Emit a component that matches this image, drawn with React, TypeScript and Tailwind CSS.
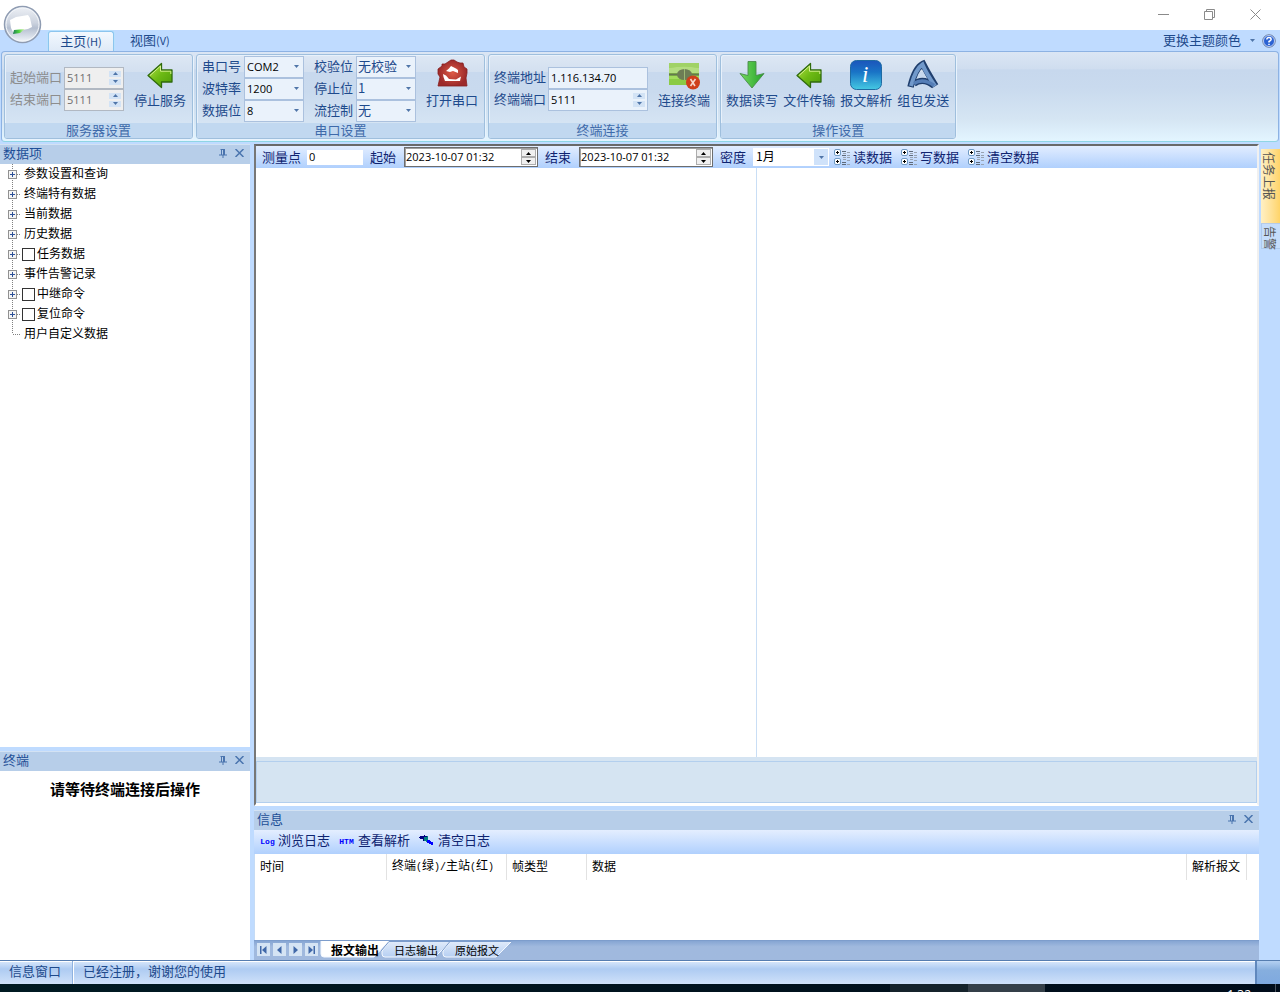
import { useState } from "react"
import type { ReactNode } from "react"

const treeItems = [
  { name: "参数设置和查询" },
  { name: "终端特有数据" },
  { name: "当前数据" },
  { name: "历史数据" },
  { name: "任务数据", check: true },
  { name: "事件告警记录" },
  { name: "中继命令", check: true },
  { name: "复位命令", check: true },
  { name: "用户自定义数据", leaf: true },
]

const outputTabs = ["报文输出", "日志输出", "原始报文"]

function Arrow({ up, className = "" }: { up?: boolean; className?: string }) {
  return (
    <svg width="5" height="3" viewBox="0 0 5 3" className={className} fill="currentColor">
      <path d={up ? "M0 3L2.5 0L5 3Z" : "M0 0H5L2.5 3Z"} />
    </svg>
  )
}

function RibbonGroup({ title, children }: { title: string; children: ReactNode }) {
  return (
    <section className="flex shrink-0 flex-col overflow-hidden rounded-[3px] border border-[#9fbfdd] bg-[linear-gradient(#dde7f4,#d3e0f0_20%,#c8d9ee_21%,#c9daee_45%,#dbe9f6)] shadow-[inset_1px_1px_0_#e8f1fb,1px_1px_0_#e8f3fd]">
      <div className="flex flex-1 items-center gap-2.5 pr-1.5 pl-[5px]">{children}</div>
      <h2 className="h-[15px] bg-[#c1d8f0] text-center leading-[13px] text-[#3e6aaa]">{title}</h2>
    </section>
  )
}

function Spin({ id, label, value, wide, disabled }: { id: string; label: string; value: string; wide?: boolean; disabled?: boolean }) {
  return (
    <div className="flex h-[22px] items-center gap-[2px]">
      <label htmlFor={id} className={`pb-[2px] ${disabled ? "text-[#8d8d8d]" : ""}`}>
        {label}
      </label>
      <div
        className={`flex h-[22px] items-center border pr-[2px] ${wide ? "w-[100px]" : "w-[60px]"} ${
          disabled ? "border-[#b1b8c2] bg-[#efefef] text-[#6d6d6d]" : "border-[#abc1de] bg-[#eaf2fb] text-black"
        }`}
      >
        <input
          id={id}
          defaultValue={value}
          disabled={disabled}
          className="w-0 min-w-0 flex-1 pl-[2px] font-[Open_Sans,sans-serif] text-[11px] outline-none"
        />
        <div className="flex flex-col gap-[2px] text-[#4f75a8]">
          <button aria-label={`${label} +`} disabled={disabled} className="flex h-[6px] w-3 items-center justify-center bg-[#d3e3f5]">
            <Arrow up />
          </button>
          <button aria-label={`${label} -`} disabled={disabled} className="flex h-[6px] w-3 items-center justify-center bg-[#d3e3f5]">
            <Arrow />
          </button>
        </div>
      </div>
    </div>
  )
}

function Combo({ id, label, value, dim }: { id: string; label: string; value: string; dim?: boolean }) {
  return (
    <div className="flex h-[22px] items-center gap-[3px]">
      <label htmlFor={id} className="pb-[2px]">
        {label}
      </label>
      <div className="relative h-[22px] w-[60px] border border-[#abc1de] bg-[#eaf2fb]">
        <select
          id={id}
          className={`block h-5 w-full appearance-none outline-none ${
            dim ? "pb-[2px] pl-px text-[13px] text-[#1e4a8c]" : "pl-[2px] font-[Open_Sans,sans-serif] text-[11px] text-black"
          }`}
        >
          <option>{value}</option>
        </select>
        <Arrow className="pointer-events-none absolute top-2 right-1 text-[#4f75a8]" />
      </div>
    </div>
  )
}

function BigButton({ label, children }: { label: string; children: ReactNode }) {
  return (
    <button className="flex flex-col items-center pb-2.5">
      <svg width="32" height="32" viewBox="0 0 32 32" aria-hidden="true">
        {children}
      </svg>
      <span className="leading-[18px]">{label}</span>
    </button>
  )
}

function GreenLeftArrow() {
  return (
    <>
      <defs>
        <linearGradient id="leaf" x1="0" y1="0" x2="1" y2="1">
          <stop offset="0" stopColor="#b9e34a" />
          <stop offset="0.5" stopColor="#6dba14" />
          <stop offset="1" stopColor="#4c9a08" />
        </linearGradient>
      </defs>
      <path d="M4 16.5L17.500 4.500V11H28V23H17.500V28.500Z" fill="url(#leaf)" stroke="#2f6a0d" strokeWidth="1.300" strokeLinejoin="round" />
      <path d="M6 16.500L16.500 7V12.200H26.800V15" fill="none" stroke="#d3f08e" strokeWidth="1" />
    </>
  )
}

function PanelHeader({ title }: { title: string }) {
  return (
    <header className="flex h-5 shrink-0 items-center border-t border-[#d3e2f3] bg-[#b7cee9] px-[3px] pb-[3px] text-[#1e4e97]">
      <h2 className="flex-1 leading-4">{title}</h2>
      <button aria-label="固定" className="flex w-4 justify-center">
        <svg width="8" height="9" viewBox="0 0 8 9" fill="none" stroke="#4a74ae">
          <path d="M2.500 0V6M1.500 .5H6M5.500 0V6M4.500 0V6M0 6H8M4 6V9" />
        </svg>
      </button>
      <button aria-label="关闭" className="flex w-4 justify-center">
        <svg width="9" height="8" viewBox="0 0 9 8" stroke="#4a74ae" strokeWidth="1.500">
          <path d="M.5 0L8.500 8M8.500 0L.5 8" />
        </svg>
      </button>
    </header>
  )
}

function TreeNode({ item }: { item: { name: string; check?: boolean; leaf?: boolean } }) {
  const lines = (
    <svg width="22" height="20" viewBox="0 0 22 20" fill="none" shapeRendering="crispEdges">
      <path d={item.leaf ? "M12.500 0V10" : "M12.500 0V20"} stroke="#808080" strokeDasharray="1 1" />
      <path d="M13 10.500H21" stroke="#808080" strokeDasharray="1 1" />
      {!item.leaf && (
        <>
          <rect x="8.500" y="6.500" width="8" height="8" fill="#f4f4f4" stroke="#919191" />
          <path d="M10 10.500H15M12.500 8V13" stroke="#2b4f96" />
        </>
      )}
    </svg>
  )
  return (
    <li className="flex h-5 items-center">
      {item.leaf ? lines : <button aria-label={`展开 ${item.name}`}>{lines}</button>}
      {item.check ? (
        <label className="flex items-center gap-[2px]">
          <input type="checkbox" className="size-[13px] appearance-none border border-[#333] bg-white checked:bg-[#4a74ae]" />
          <span className="pb-[2px]">{item.name}</span>
        </label>
      ) : (
        <span className="pb-[2px] pl-[2px]">{item.name}</span>
      )}
    </li>
  )
}

function DateField({ id, label }: { id: string; label: string }) {
  return (
    <div className="flex items-center gap-2">
      <label htmlFor={id}>{label}</label>
      <div className="flex h-5 w-[134px] items-center border border-[#6d6d6d] bg-white pr-px shadow-[inset_1px_1px_0_#a0a0a0]">
        <input
          id={id}
          defaultValue="2023-10-07 01:32"
          className="w-0 min-w-0 flex-1 pl-px font-[Open_Sans,sans-serif] text-[11px] text-black outline-none"
        />
        <div className="flex flex-col text-black">
          <button aria-label={`${label} +`} className="flex h-2 w-[15px] items-center justify-center border border-[#adadad] bg-[#f0f0f0]">
            <Arrow up />
          </button>
          <button aria-label={`${label} -`} className="flex h-2 w-[15px] items-center justify-center border border-[#adadad] bg-[#f0f0f0]">
            <Arrow />
          </button>
        </div>
      </div>
    </div>
  )
}

function DataButton({ label }: { label: string }) {
  return (
    <button className="flex items-center gap-[3px]">
      <svg width="16" height="16" viewBox="0 0 16 16" fill="none">
        <rect x=".5" y=".5" width="6" height="6" rx="1.500" fill="#fff" stroke="#6f9ac4" />
        <rect x=".5" y="9.500" width="6" height="6" rx="1.500" fill="#fff" stroke="#6f9ac4" />
        <path d="M2 3.500H5M3.500 2V5M2 12.500H5M3.500 11V14" stroke="#000" />
        <path d="M8 2.500H12M8 6.500H12M8 13.500H12M8 15.500H12" stroke="#5f6a79" />
        <path d="M13 3.500H16M13 6.500H16M13 8.500H16M13 11.500H16M13 15.500H16M9 4.500H12M9 8.500H12M9 10.500H12" stroke="#98a3b2" />
      </svg>
      {label}
    </button>
  )
}

function NavButton({ label, d }: { label: string; d: string }) {
  return (
    <button aria-label={label} className="flex size-[13px] items-center justify-center bg-[#d5e4f4]">
      <svg width="7" height="8" viewBox="0 0 7 8" fill="#4068a8">
        <path d={d} />
      </svg>
    </button>
  )
}

function Ribbon() {
  return (
    <div className="mx-px flex h-[91px] shrink-0 gap-[3px] rounded-[4px] border border-[#8db2e3] border-b-[#8fd5e4] bg-[linear-gradient(#dbe6f4,#cfddef_19%,#c7d8ed_20%,#c9daee_40%,#d5e5f3_75%,#e3f5ff)] px-[2px] pt-[2px] pb-[2px] text-[#1e4a8c]">
      <RibbonGroup title="服务器设置">
        <div className="mb-px">
          <Spin id="start-port" label="起始端口" value="5111" disabled />
          <Spin id="end-port" label="结束端口" value="5111" disabled />
        </div>
        <BigButton label="停止服务">
          <GreenLeftArrow />
        </BigButton>
      </RibbonGroup>

      <RibbonGroup title="串口设置">
        <div>
          <Combo id="com" label="串口号" value="COM2" />
          <Combo id="baud" label="波特率" value="1200" />
          <Combo id="bits" label="数据位" value="8" />
        </div>
        <div>
          <Combo id="parity" label="校验位" value="无校验" dim />
          <Combo id="stop" label="停止位" value="1" dim />
          <Combo id="flow" label="流控制" value="无" dim />
        </div>
        <BigButton label="打开串口">
          <defs>
            <radialGradient id="house">
              <stop offset="0" stopColor="#dd5a46" />
              <stop offset="1" stopColor="#9c2a2a" />
            </radialGradient>
          </defs>
          <path d="M12 3L15 1H18L21 3L24 4H27L28 8L31 10V14L30 19L31 27H2L4 18L2 15V10L6 7V5H9Z" fill="url(#house)" stroke="#872020" strokeWidth=".8" />
          <path d="M10 12L13 9.500L15 7L20 9.500L22 11L22 14L17 12L14 13Z" fill="#fff" />
          <path d="M7 15L10 16.500L13 20L20 20.500L25 17.500L24 22H9L7.500 18Z" fill="#fff" />
        </BigButton>
      </RibbonGroup>

      <RibbonGroup title="终端连接">
        <div className="mb-px">
          <div className="flex h-[22px] items-center gap-[2px]">
            <label htmlFor="addr" className="pb-[2px]">
              终端地址
            </label>
            <input
              id="addr"
              defaultValue="1.116.134.70"
              className="h-[22px] w-[100px] border border-[#abc1de] bg-[#eaf2fb] pl-[2px] font-[Open_Sans,sans-serif] text-[11px] text-black outline-none"
            />
          </div>
          <Spin id="term-port" label="终端端口" value="5111" wide />
        </div>
        <BigButton label="连接终端">
          <path d="M1 4H31V26H1Z" fill="#8bcb45" />
          <path d="M1 4H31V9Q16 6 1 9Z" fill="#a0d266" />
          <path d="M1 9Q16 6 31 9V14H1Z" fill="#b3dd80" />
          <path d="M1 17H31V20H1Z" fill="#a2dc5c" />
          <path d="M1 15.500H31" stroke="#64794e" strokeWidth="2" />
          <ellipse cx="16.500" cy="15.500" rx="7.500" ry="5.500" fill="#6d7d55" />
          <path d="M16.500 10V21" stroke="#9cb873" strokeWidth="1" />
          <circle cx="25" cy="23.500" r="7" fill="#cf3f1b" />
          <path d="M22.500 20L27 27M27.500 20L22.500 27" stroke="#f7d7cc" strokeWidth="1.600" />
        </BigButton>
      </RibbonGroup>

      <RibbonGroup title="操作设置">
        <div className="flex gap-[5px]">
          <BigButton label="数据读写">
            <defs>
              <linearGradient id="down">
                <stop offset="0" stopColor="#74d95e" />
                <stop offset="1" stopColor="#24a32a" />
              </linearGradient>
            </defs>
            <path d="M12 2.500H20V16.500L28 14.500L16 29L4 14.500L12 16.500Z" fill="url(#down)" stroke="#4b8b4b" strokeWidth=".9" />
          </BigButton>
          <BigButton label="文件传输">
            <GreenLeftArrow />
          </BigButton>
          <BigButton label="报文解析">
            <defs>
              <linearGradient id="info" x1="0" y1="0" x2="0" y2="1">
                <stop offset="0" stopColor="#1b55bb" />
                <stop offset=".4" stopColor="#1974c6" />
                <stop offset="1" stopColor="#45c9e2" />
              </linearGradient>
            </defs>
            <rect x=".5" y="1.500" width="31" height="29" rx="6" fill="url(#info)" stroke="#1e6ba3" />
            <text x="12" y="23" fill="#fff" fontFamily="Liberation Serif, serif" fontStyle="italic" fontSize="23">
              i
            </text>
          </BigButton>
          <BigButton label="组包发送">
            <path d="M3.500 28Q8 9 16 5Q20 13 28.500 27" fill="none" stroke="#203f6e" strokeWidth="6.500" />
            <path d="M7 25Q16 18 27 27" fill="none" stroke="#203f6e" strokeWidth="6" />
            <path d="M4 27Q8.500 10 15.500 5.500Q19 14 28 27" fill="none" stroke="#7199cb" strokeWidth="4" />
            <path d="M7 24.500Q16 18.500 27 26.500" fill="none" stroke="#557eb7" strokeWidth="3.500" />
          </BigButton>
        </div>
      </RibbonGroup>
    </div>
  )
}

export default function App() {
  const [tab, setTab] = useState(0)

  return (
    <div className="relative flex h-screen flex-col overflow-hidden bg-[#bfdbff] font-[Noto_Sans_CJK_SC,sans-serif] text-[13px] leading-4 whitespace-nowrap text-[#1e4a8c]">
      <div className="flex h-[30px] shrink-0 items-start justify-end bg-white pr-[2px]">
        <button aria-label="最小化" className="flex h-7 w-[46px] items-center justify-center">
          <svg width="11" height="11" stroke="#8a8a8a" fill="none"><path d="M0 5.500H11" /></svg>
        </button>
        <button aria-label="还原" className="flex h-7 w-[46px] items-center justify-center">
          <svg width="11" height="11" stroke="#8a8a8a" fill="none"><path d="M.5 2.500H8.500V10.500H.5ZM2.500 2.500V.5H10.500V8.500H8.500" /></svg>
        </button>
        <button aria-label="关闭窗口" className="flex h-7 w-[46px] items-center justify-center">
          <svg width="11" height="11" stroke="#8a8a8a" fill="none"><path d="M.5 .5L10.500 10.500M10.500 .5L.5 10.500" /></svg>
        </button>
      </div>

      {/* round application button, sits over the title bar and the tab row */}
      <button aria-label="应用菜单" className="absolute top-[5px] left-[3px]">
        <svg width="40" height="40" viewBox="0 0 40 40">
          <defs>
            <linearGradient id="orb" x1="0" y1="0" x2="0" y2="1">
              <stop offset="0" stopColor="#eef1f6" />
              <stop offset=".45" stopColor="#ccd3df" />
              <stop offset=".6" stopColor="#b5bfd0" />
              <stop offset="1" stopColor="#f4f8fc" />
            </linearGradient>
            <linearGradient id="strip">
              <stop offset="0" stopColor="#217c58" />
              <stop offset=".5" stopColor="#4dd53c" />
              <stop offset="1" stopColor="#f0f6cc" />
            </linearGradient>
          </defs>
          <circle cx="19.500" cy="19.500" r="18" fill="url(#orb)" stroke="#8f9cb2" strokeWidth="1.500" />
          <circle cx="19.500" cy="19.500" r="16.500" fill="none" stroke="#f3f6fa" />
          <path d="M7 15L13 12L25 10L27 13L29 22L25 24L19 25L10 27L8 23Z" fill="#fff" />
          <path d="M11 25L22 24L17 28L10 29Z" fill="url(#strip)" />
        </svg>
      </button>

      <nav className="flex h-[21px] shrink-0 items-end pr-1 pl-12">
        <button className="h-5 w-[66px] rounded-t-[3px] border border-b-0 border-[#8cc5ee] bg-linear-to-b from-[#f2f8fe] to-[#dfeaf7] pb-[2px] leading-4 shadow-[0_0_2px_#a8f0f8]">
          主页<span className="text-[11px]">(H)</span>
        </button>
        <button className="ml-4 h-5 pb-[2px] leading-4">
          视图<span className="text-[11px]">(V)</span>
        </button>
        <div className="ml-auto flex h-[21px] items-center gap-[7px]">
          <button className="flex items-center gap-[9px]">
            <span className="pb-[2px]">更换主题颜色</span>
            <Arrow className="text-[#4f75a8]" />
          </button>
          <button aria-label="帮助">
            <svg width="14" height="14" viewBox="0 0 14 14">
              <circle cx="7" cy="7" r="6.300" fill="#2b62d3" stroke="#7e8ca5" />
              <circle cx="7" cy="7" r="5.500" fill="none" stroke="#dbe6fa" strokeWidth=".8" />
              <path d="M4.800 5.500Q5 3.500 7 3.500T9.200 5.300Q9.200 6.300 7 7.500V8.600M7 9.700V11" fill="none" stroke="#fff" strokeWidth="1.500" />
            </svg>
          </button>
        </div>
      </nav>

      <Ribbon />

      <main className="flex min-h-0 flex-1 pt-[2px]">
        <aside className="flex w-[250px] shrink-0 flex-col">
          <PanelHeader title="数据项" />
          <ul className="min-h-0 flex-1 bg-white text-xs text-black">
            {treeItems.map((item) => (
              <TreeNode key={item.name} item={item} />
            ))}
          </ul>
          <div className="mt-1 flex flex-col">
            <PanelHeader title="终端" />
            <div className="h-[189px] bg-white pt-2 text-center text-[15px] leading-5 font-bold text-black">请等待终端连接后操作</div>
          </div>
        </aside>

        <div className="ml-1 flex min-w-0 flex-1 flex-col">
          <div className="flex min-h-0 flex-1 flex-col border-t-2 border-r-2 border-b-2 border-l-2 border-t-[#696969] border-r-[#f0f0f0] border-b-white border-l-[#777] bg-white pb-px">
            <div className="flex h-[22px] shrink-0 items-center gap-[7px] bg-linear-to-b from-[#e2edff] to-[#b0d0fd] pl-1.5 text-[#0e2370]">
              <div className="flex items-center gap-1.5">
                <label htmlFor="point">测量点</label>
                <input id="point" defaultValue="0" className="h-[15px] w-14 bg-white pl-[2px] font-[Open_Sans,sans-serif] text-[11px] text-black outline-none" />
              </div>
              <DateField id="from" label="起始" />
              <DateField id="to" label="结束" />
              <div className="flex items-center gap-[7px]">
                <label htmlFor="density">密度</label>
                <div className="relative h-[18px] w-[76px] bg-white">
                  <select id="density" className="block h-[18px] w-full appearance-none pb-[2px] pl-[3px] text-xs text-black outline-none">
                    <option>1月</option>
                  </select>
                  <span className="pointer-events-none absolute top-px right-px flex h-4 w-3.5 items-center justify-center bg-[#cfe2fa] text-[#4f75a8]">
                    <Arrow />
                  </span>
                </div>
              </div>
              <div className="-ml-[2px] flex gap-[9px]">
                <DataButton label="读数据" />
                <DataButton label="写数据" />
                <DataButton label="清空数据" />
              </div>
            </div>
            <div className="flex min-h-0 flex-1">
              <div className="flex-1 border-r border-[#c9def5]" />
              <div className="flex-1" />
            </div>
            <div className="h-[46px] shrink-0 bg-[#d5e4f2] pt-1">
              <div className="h-[42px] border border-[#b3cfee]" />
            </div>
          </div>

          <section className="mt-1 flex h-[150px] shrink-0 flex-col">
            <PanelHeader title="信息" />
            <div className="flex h-6 shrink-0 items-center gap-[9px] bg-linear-to-b from-[#e4eeff] to-[#b0d0fd] pb-[5px] pl-1.5 text-[#0e2370]">
              <button className="flex items-center gap-[3px]">
                <span className="w-[15px] pt-1 font-[Liberation_Mono,monospace] text-[8px] font-bold text-[#0000ff]">Log</span>
                浏览日志
              </button>
              <button className="flex items-center gap-1">
                <span className="w-[15px] pt-1 font-[Liberation_Mono,monospace] text-[8px] font-bold text-[#0000ff]">HTM</span>
                查看解析
              </button>
              <button className="flex items-center gap-1">
                <svg width="15" height="12" viewBox="0 0 15 12">
                  <path d="M1 2H5V1H6V2H9V8H7V7H4V5H1V4H0V3H1Z" fill="#000080" />
                  <path d="M5 3H8V2H9V8H7V7H5Z" fill="#008080" />
                  <path d="M8 6H11V7H12V8H14V11H12V10H10V9H8Z" fill="#0000ff" />
                </svg>
                清空日志
              </button>
            </div>
            <div className="min-h-0 flex-1 border-l border-[#c5dbf5] bg-white">
              <table className="table-fixed border-separate border-spacing-0 text-xs text-black">
                <thead>
                  <tr className="h-[26px] text-left [&>th]:border-r [&>th]:border-[#e2e2e2] [&>th]:p-0 [&>th]:pb-[2px] [&>th]:pl-[5px] [&>th]:font-normal">
                    <th className="w-[132px]">时间</th>
                    <th className="w-[120px]">
                      终端<Half>(</Half>绿<Half>)/</Half>主站<Half>(</Half>红<Half>)</Half>
                    </th>
                    <th className="w-20">帧类型</th>
                    <th className="w-[600px]">数据</th>
                    <th className="w-[60px]">解析报文</th>
                  </tr>
                </thead>
              </table>
            </div>
            <div className="flex h-5 shrink-0 items-start border-t border-[#7d9dcc] bg-linear-to-b from-[#86a5d3] to-[#a0b9de] to-30% pl-[3px] text-black">
              <div className="flex gap-[3px] pt-[2px]">
                <NavButton label="首页" d="M0 0H1.500V8H0ZM6.500 0V8L2 4Z" />
                <NavButton label="上一页" d="M5.500 0V8L1 4Z" />
                <NavButton label="下一页" d="M1.500 0V8L6 4Z" />
                <NavButton label="末页" d="M.5 0V8L5 4ZM5.500 0H7V8H5.500Z" />
              </div>
              <div className="ml-[2px] flex">
                {outputTabs.map((name, i) => (
                  <button key={name} onClick={() => setTab(i)} className="relative h-[17px] w-[61px]">
                    <svg width="70" height="17" viewBox="0 0 70 17" className="absolute top-0 left-0">
                      <defs>
                        <linearGradient id="tab" x1="0" y1="0" x2="0" y2="1">
                          <stop offset="0" stopColor="#dfeafa" />
                          <stop offset="1" stopColor="#b6cff2" />
                        </linearGradient>
                      </defs>
                      <path d={i === 0 ? "M1 0V13Q1 16 4 16H54L69 0Z" : "M8 1L1 10V13Q1 16 4 16H54L69 1Z"} fill={tab === i ? "#fff" : "url(#tab)"} />
                      <path d={i === 0 ? "M1 0V13Q1 16 4 16H54L69 0" : "M8 1L1 10V13Q1 16 4 16H54L69 1"} fill="none" stroke="#f3f8ff" />
                      {i > 0 && <path d="M0 10L8 .5H69" fill="none" stroke="#7b9ccc" />}
                    </svg>
                    <span className={`relative block pl-[9px] leading-[14px] ${tab === i ? "text-xs font-bold" : "text-[11px]"}`}>{name}</span>
                  </button>
                ))}
              </div>
            </div>
          </section>
        </div>

        <div className="flex w-[21px] shrink-0 flex-col items-end pt-[5px] text-xs text-[#555]">
          <button className="flex h-[75px] w-[19px] items-center justify-start border-b border-[#b6cbe6] bg-linear-to-r from-[#fff0c4] to-[#ffd468] pt-[3px] pr-[3px] [text-orientation:sideways] [writing-mode:vertical-rl]">
            任务上报
          </button>
          <button className="flex h-[25px] w-[19px] items-center justify-start border-b border-l border-[#aecaed] bg-[#c5ddfb] pt-[2px] pr-[3px] [text-orientation:sideways] [writing-mode:vertical-rl]">
            告警
          </button>
        </div>
      </main>

      <footer className="flex h-6 shrink-0 border-t border-[#567db0] bg-linear-to-b from-[#d9e8fb] from-0% via-[#aecbf2] via-35% to-[#cfe1f9] leading-5 shadow-[inset_0_1px_0_#fff]">
        <span className="border-r border-[#8fb2df] pr-[11px] pl-[9px]">信息窗口</span>
        <span className="flex-1 border-l border-white pl-[9px]">已经注册，谢谢您的使用</span>
        <span className="w-[25px] border-l-2 border-[#6088bd] bg-linear-to-b from-[#b4d0f2] via-[#86aede] via-40% to-[#7fa9df]" />
      </footer>

      <div className="flex h-2 shrink-0 justify-end overflow-hidden bg-linear-to-r from-[#001a22] to-[#000c1a]">
        <span className="w-[78px] bg-[#15232b]" />
        <span className="w-[77px] bg-[#343f48]" />
        <span className="w-[231px] border-r border-[#4b545e] pt-[3px] pr-6 text-right font-[Open_Sans,sans-serif] text-xs leading-4 text-white">1:32</span>
        <span className="w-1" />
      </div>
    </div>
  )
}

function Half({ children }: { children: ReactNode }) {
  return <span className="font-[Liberation_Mono,monospace] text-[10px]">{children}</span>
}
